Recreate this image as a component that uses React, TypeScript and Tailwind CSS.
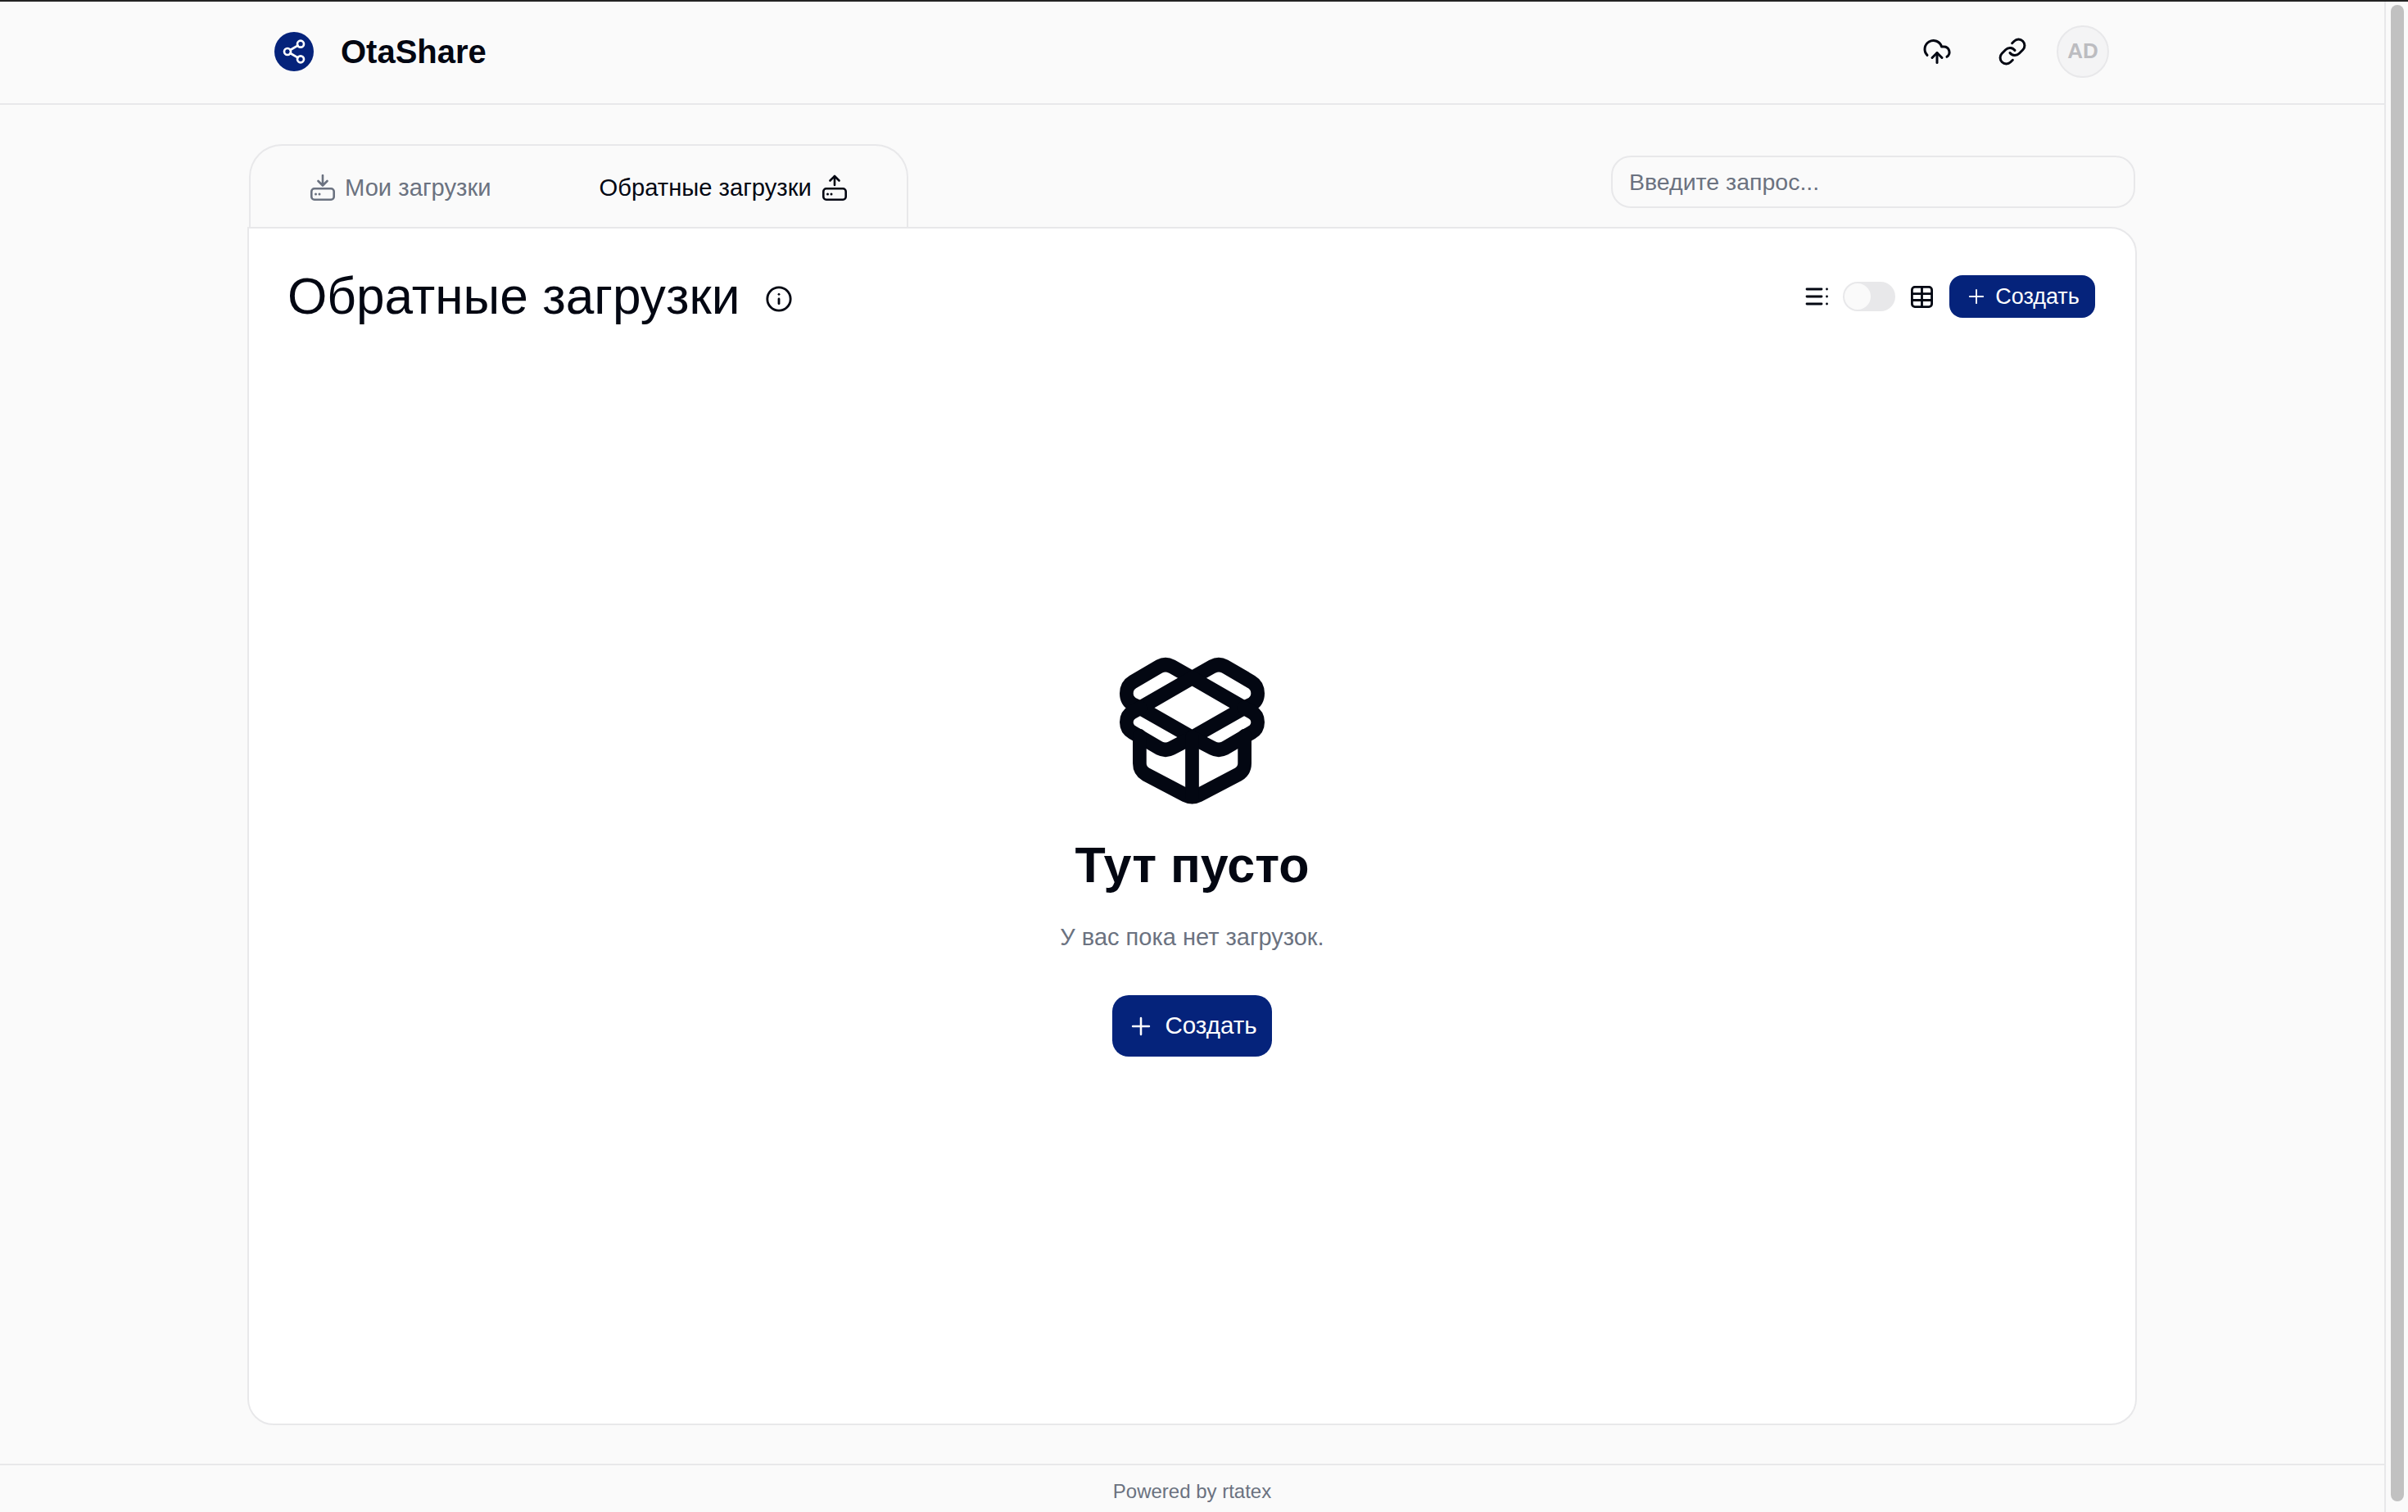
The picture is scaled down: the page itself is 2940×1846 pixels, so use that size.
import { CloudUpload, Info, Link, Plus, Share2 } from 'lucide-react'

function TrayIcon({ up, className }: { up?: boolean; className?: string }) {
  return (
    <svg viewBox="0 0 30 32" fill="none" stroke="currentColor" strokeWidth="2.6" strokeLinecap="round" strokeLinejoin="round" className={className}>
      <rect x="1.3" y="17.3" width="27.4" height="13.4" rx="3.5" />
      {up ? (
        <path d="M15 13V2M9.5 7.5 15 2l5.5 5.5" />
      ) : (
        <path d="M15 1v12M9.5 8 15 13.5 20.5 8" />
      )}
      <path d="M6.5 24h.01M11 24h.01" strokeWidth="3" />
    </svg>
  )
}

function ListIcon() {
  return (
    <svg viewBox="0 0 28 24" fill="none" stroke="currentColor" strokeWidth="2.8" strokeLinecap="round" className="h-[24px] w-[28px]">
      <path d="M2 3h18M2 12h18M2 21h18" />
      <path d="M26.5 3h.01M26.5 12h.01M26.5 21h.01" />
    </svg>
  )
}

function TableIcon() {
  return (
    <svg viewBox="0 0 27 27" fill="none" stroke="currentColor" strokeWidth="2.8" strokeLinejoin="round" className="h-[27px] w-[27px]">
      <rect x="1.4" y="1.4" width="24.2" height="24.2" rx="3.5" />
      <path d="M13.5 1.4v24.2M1.4 9.7h24.2M1.4 17.5h24.2" />
    </svg>
  )
}

function OpenBoxIcon() {
  return (
    <svg viewBox="380 95 530 518" preserveAspectRatio="none" fill="none" stroke="currentColor" strokeWidth="50" strokeLinecap="round" strokeLinejoin="round" className="h-[182px] w-[177px]">
      <path d="M645 168 570 128Q548 117 525 128L428 182Q405 195 405 222Q405 248 428 260L455 272" />
      <path d="M645 168 720 128Q742 117 765 128L862 182Q885 195 885 222Q885 248 862 260L835 272" />
      <path d="M645 168 835 272 645 375 455 272Z" />
      <path d="M455 272 428 286Q405 298 405 322Q405 346 428 358L525 412Q548 423 570 412L645 375" />
      <path d="M835 272 862 286Q885 298 885 322Q885 346 862 358L765 412Q742 423 720 412L645 375" />
      <path d="M453 370V465Q453 490 476 503L620 575Q645 587 670 575L814 503Q837 490 837 465V370" />
      <path d="M645 375V580" />
    </svg>
  )
}

export default function App() {
  return (
    <div className="flex h-[1846px] w-[2940px] overflow-hidden border-t-2 border-[#222222] bg-[#fafafa] font-['Liberation_Sans',sans-serif] text-[#030712]">
      <div className="flex min-w-0 flex-1 flex-col">
        <header className="flex h-[126px] shrink-0 items-center border-b-2 border-[#e8e8ea] pb-[3px] pl-[335px] pr-[336px]">
          <div className="flex h-[48px] w-[48px] items-center justify-center rounded-full bg-[#05237b] text-white">
            <Share2 size={32} strokeWidth={2} />
          </div>
          <span className="ml-[33px] text-[40px] leading-none font-bold">OtaShare</span>
          <div className="ml-auto flex items-center">
            <CloudUpload size={36} strokeWidth={2} />
            <Link size={36} strokeWidth={2} className="ml-[56px]" />
            <div className="ml-[36px] flex h-[64px] w-[64px] items-center justify-center rounded-full border-2 border-[#e8e8ea] bg-[#f4f4f5] text-[26px] font-bold text-[#bcbcc0]">
              AD
            </div>
          </div>
        </header>

        <main className="flex flex-1 flex-col px-[302px] pt-[48px]">
          <div className="flex items-end">
            <div className="ml-[2px] flex h-[101px] w-[805px] items-center rounded-t-[40px] border-2 border-b-0 border-[#e8e8ea] pt-[4px] pl-[73px] text-[29.2px]">
              <TrayIcon className="-mt-[2px] h-[32px] w-[30px] text-[#6b7280]" />
              <span className="ml-[12px] text-[#6b7280]">Мои загрузки</span>
              <span className="ml-[132px]">Обратные загрузки</span>
              <TrayIcon up className="-mt-[2px] ml-[13px] h-[32px] w-[30px]" />
            </div>
            <input
              placeholder="Введите запрос..."
              className="mr-[2px] mb-[23px] ml-auto h-[64px] w-[640px] rounded-[24px] border-2 border-[#e8e8ea] bg-[#fafafa] px-[20px] text-[28.5px] outline-none placeholder:text-[#6b7280]"
            />
          </div>

          <section className="flex h-[1463px] flex-col rounded-tr-[32px] rounded-b-[32px] border-2 border-[#e8e8ea] bg-white">
            <div className="mt-[57px] flex h-[52px] items-center pr-[49px] pl-[47px]">
              <h1 className="text-[62.2px] leading-none font-normal">Обратные загрузки</h1>
              <Info size={34} strokeWidth={2} className="ml-[31px] mt-[6px]" />
              <div className="ml-auto flex items-center">
                <ListIcon />
                <div className="ml-[18px] flex h-[36px] w-[64px] items-center rounded-full bg-[#e8e8ea] p-[2px]">
                  <div className="h-[32px] w-[32px] rounded-full bg-[#fafafa]" />
                </div>
                <div className="ml-[19px]">
                  <TableIcon />
                </div>
                <button className="ml-[20px] flex h-[52px] w-[178px] items-center justify-center rounded-[16px] bg-[#05237b] text-[27px] text-white">
                  <Plus size={28} strokeWidth={1.6} />
                  <span className="ml-[9px]">Создать</span>
                </button>
              </div>
            </div>

            <div className="mt-[414px] flex flex-col items-center">
              <OpenBoxIcon />
              <h2 className="mt-[42px] text-[61px] leading-none font-bold">Тут пусто</h2>
              <p className="mt-[43px] text-[29px] leading-none text-[#6b7280]">У вас пока нет загрузок.</p>
              <button className="mt-[56px] flex h-[75px] w-[195px] items-center justify-center rounded-[20px] bg-[#05237b] text-[29.5px] text-white">
                <Plus size={34} strokeWidth={1.8} />
                <span className="ml-[12px]">Создать</span>
              </button>
            </div>
          </section>
        </main>

        <footer className="flex h-[59px] shrink-0 items-center justify-center border-t-2 border-[#e8e8ea] pt-[6px] text-[24px] text-[#6b7280]">
          Powered by rtatex
        </footer>
      </div>

      <aside className="flex w-[29px] shrink-0 justify-center border-l-2 border-[#e8e8ea] pt-[4px]">
        <div className="h-[1827px] w-[16px] rounded-full bg-[#c1c1c1]" />
      </aside>
    </div>
  )
}
